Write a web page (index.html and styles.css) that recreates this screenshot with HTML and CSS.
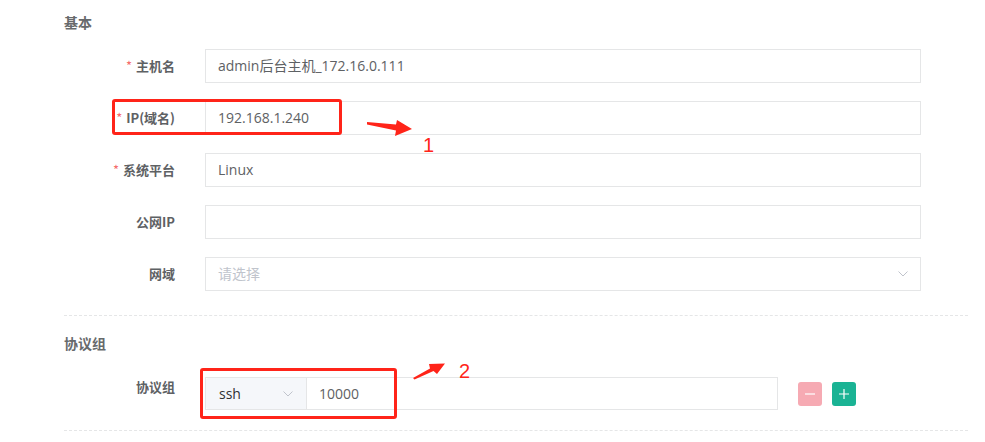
FILE: index.html
```html
<!DOCTYPE html>
<html lang="zh-CN">
<head>
<meta charset="utf-8">
<title>主机编辑</title>
<link rel="stylesheet" href="styles.css">
</head>
<body>
<div class="page">
  <section class="section">
    <h3 class="section-title">基本</h3>
    <div class="form-row">
      <label class="label"><span class="req">*</span>主机名</label>
      <div class="input">admin后台主机_172.16.0.111</div>
    </div>
    <div class="form-row">
      <label class="label"><span class="req">*</span>IP(域名)</label>
      <div class="input">192.168.1.240</div>
    </div>
    <div class="form-row">
      <label class="label"><span class="req">*</span>系统平台</label>
      <div class="input">Linux</div>
    </div>
    <div class="form-row">
      <label class="label">公网IP</label>
      <div class="input"></div>
    </div>
    <div class="form-row">
      <label class="label">网域</label>
      <div class="input select">
        <span class="placeholder">请选择</span>
        <svg class="chevron" width="10" height="6" viewBox="0 0 10 6"><path d="M0.5 0.5 L5 5 L9.5 0.5" fill="none" stroke="#c0c4cc" stroke-width="1"/></svg>
      </div>
    </div>
  </section>
  <div class="divider"></div>
  <section class="section">
    <h3 class="section-title title-2">协议组</h3>
    <div class="form-row proto-row">
      <label class="label label-top">协议组</label>
      <div class="input-group">
        <div class="prepend">
          <span>ssh</span>
          <svg class="chevron" width="10" height="6" viewBox="0 0 10 6"><path d="M0.5 0.5 L5 5 L9.5 0.5" fill="none" stroke="#c0c4cc" stroke-width="1"/></svg>
        </div>
        <div class="group-input">10000</div>
      </div>
      <div class="btns">
        <button class="btn btn-minus" type="button"><svg width="12" height="12" viewBox="0 0 12 12"><path d="M1 6 H11" stroke="#fff" stroke-width="1.2"/></svg></button>
        <button class="btn btn-plus" type="button"><svg width="12" height="12" viewBox="0 0 12 12"><path d="M1 6 H11 M6 1 V11" stroke="#fff" stroke-width="1.2"/></svg></button>
      </div>
    </div>
  </section>
  <div class="divider divider-2"></div>

  <div class="mark mark-1"></div>
  <div class="mark mark-2"></div>
  <svg class="arrows" width="985" height="442" viewBox="0 0 985 442">
    <polygon points="367,122 396,124.5 397,120 412,129 395,136 396,130.5 367,124.5" fill="#ff2419"/>
    <polygon points="413,378 430,368.5 429,364 445,363.5 437,374 433.5,371 414.5,379.5" fill="#ff2419"/>
  </svg>
  <span class="num num-1">1</span>
  <span class="num num-2">2</span>
</div>
</body>
</html>
```
FILE: styles.css
```css
html, body {
  margin: 0;
  padding: 0;
  background: #fff;
}
body {
  font-family: "Open Sans", "Noto Sans CJK SC", sans-serif;
  color: #606266;
}
.page {
  position: relative;
  width: 985px;
  height: 442px;
  overflow: hidden;
  padding-left: 64px;
  box-sizing: border-box;
}
.section-title {
  margin: 0;
  padding-top: 12px;
  height: 20px;
  line-height: 20px;
  font-size: 14px;
  font-weight: 700;
  color: #676a6c;
  font-family: "Noto Sans CJK SC", sans-serif;
  margin-bottom: 17px;
}
.title-2 {
  padding-top: 17px;
  margin-bottom: 24px;
}
.form-row {
  display: flex;
  align-items: center;
  gap: 30px;
  margin-bottom: 18px;
}
.form-row:last-child {
  margin-bottom: 0;
}
.label {
  width: 111px;
  text-align: right;
  font-size: 13px;
  font-weight: 700;
  color: #5e6164;
  font-family: "Noto Sans CJK SC", sans-serif;
  line-height: 34px;
  flex: none;
}
.req {
  color: #f56c6c;
  font-weight: 400;
  margin-right: 4px;
}
.label-top {
  align-self: flex-start;
  line-height: 20px;
}
.input {
  width: 716px;
  height: 34px;
  box-sizing: border-box;
  border: 1px solid #e5e6e7;
  padding: 0 12px;
  font-size: 14px;
  line-height: 32px;
  color: #5e6164;
  font-family: "Open Sans", "Noto Sans CJK SC", sans-serif;
}
.select {
  display: flex;
  align-items: center;
  justify-content: space-between;
  padding-right: 12px;
}
.placeholder {
  color: #c0c4cc;
}
.divider {
  width: 904px;
  border-top: 1px dashed #e5e6e7;
  margin-top: 24px;
}
.divider-2 {
  margin-top: 20px;
}
.input-group {
  display: flex;
  width: 573px;
  height: 33px;
  box-sizing: border-box;
  border: 1px solid #e5e6e7;
  flex: none;
}
.prepend {
  width: 101px;
  background: #f5f7fa;
  border-right: 1px solid #e5e6e7;
  border-radius: 3px 0 0 3px;
  display: flex;
  align-items: center;
  justify-content: space-between;
  padding: 0 13px 0 13px;
  box-sizing: border-box;
  font-size: 14px;
  color: #303133;
}
.group-input {
  flex: 1;
  padding-left: 12px;
  font-size: 14px;
  line-height: 31px;
  color: #5e6164;
}
.btns {
  display: flex;
  gap: 10px;
  margin-left: -10px;
}
.btn {
  width: 24px;
  height: 24px;
  border: none;
  border-radius: 3px;
  padding: 0;
  display: flex;
  align-items: center;
  justify-content: center;
}
.btn-minus {
  background: #f6aab3;
}
.btn-plus {
  background: #1ab394;
}
.mark {
  position: absolute;
  border: 3px solid #ff2419;
  border-radius: 3px;
  box-sizing: border-box;
}
.mark-1 {
  left: 112px;
  top: 99px;
  width: 230px;
  height: 36px;
}
.mark-2 {
  left: 200px;
  top: 368px;
  width: 197px;
  height: 51px;
}
.arrows {
  position: absolute;
  left: 0;
  top: 0;
  pointer-events: none;
}
.num {
  position: absolute;
  color: #ff2419;
  font-family: "Liberation Sans", sans-serif;
  font-size: 20px;
  line-height: 20px;
}
.num-1 {
  left: 423px;
  top: 135px;
}
.num-2 {
  left: 459px;
  top: 361px;
}
```
